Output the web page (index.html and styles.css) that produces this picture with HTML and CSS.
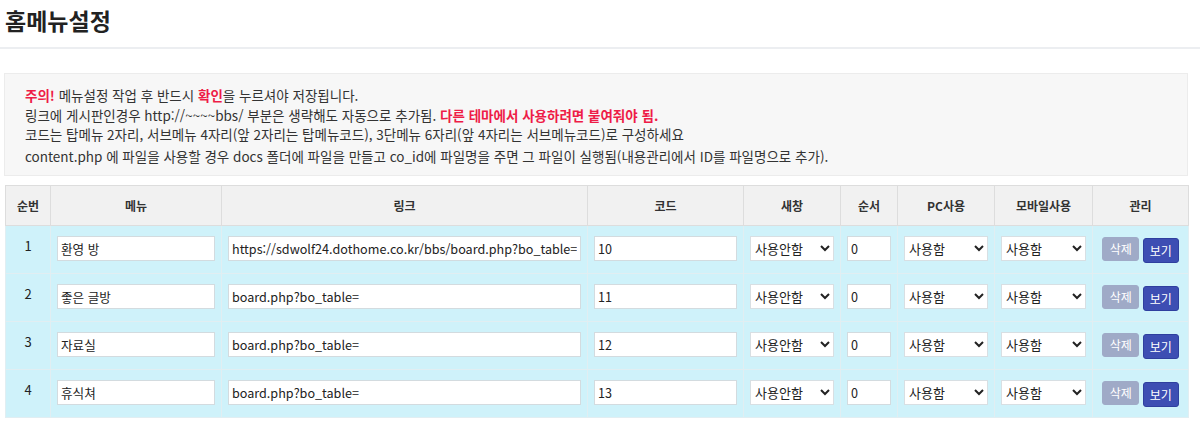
FILE: index.html
```html
<!DOCTYPE html>
<html lang="ko">
<head>
<meta charset="utf-8">
<title>홈메뉴설정</title>
<link rel="stylesheet" href="styles.css">
</head>
<body>
<div class="page">
  <h1 class="page-title">홈메뉴설정</h1>
  <div class="content">
    <div class="notice">
      <p><strong class="red">주의!</strong> 메뉴설정 작업 후 반드시 <strong class="red">확인</strong>을 누르셔야 저장됩니다.</p>
      <p>링크에 게시판인경우 http://~~~~bbs/ 부분은 생략해도 자동으로 추가됨. <strong class="red">다른 테마에서 사용하려면 붙여줘야 됨.</strong></p>
      <p>코드는 탑메뉴 2자리, 서브메뉴 4자리(앞 2자리는 탑메뉴코드), 3단메뉴 6자리(앞 4자리는 서브메뉴코드)로 구성하세요</p>
      <p class="last">content.php 에 파일을 사용할 경우 docs 폴더에 파일을 만들고 co_id에 파일명을 주면 그 파일이 실행됨(내용관리에서 ID를 파일명으로 추가).</p>
    </div>
    <table class="menu-table">
      <colgroup>
        <col class="c-no"><col class="c-menu"><col class="c-link"><col class="c-code"><col class="c-new"><col class="c-order"><col class="c-pc"><col class="c-mo"><col class="c-mng">
      </colgroup>
      <thead>
        <tr><th>순번</th><th>메뉴</th><th>링크</th><th>코드</th><th>새창</th><th>순서</th><th>PC사용</th><th>모바일사용</th><th>관리</th></tr>
      </thead>
      <tbody>
        <tr>
          <td class="no">1</td>
          <td><input class="inp" type="text" value="환영 방"></td>
          <td><input class="inp" type="text" value="https://sdwolf24.dothome.co.kr/bbs/board.php?bo_table="></td>
          <td><input class="inp" type="text" value="10"></td>
          <td><select class="sel"><option>사용안함</option><option>사용함</option></select></td>
          <td><input class="inp" type="text" value="0"></td>
          <td><select class="sel"><option>사용함</option><option>사용안함</option></select></td>
          <td><select class="sel"><option>사용함</option><option>사용안함</option></select></td>
          <td class="mng"><button class="btn btn-del" type="button">삭제</button> <a class="btn btn-view" href="#">보기</a></td>
        </tr>
        <tr>
          <td class="no">2</td>
          <td><input class="inp" type="text" value="좋은 글방"></td>
          <td><input class="inp" type="text" value="board.php?bo_table="></td>
          <td><input class="inp" type="text" value="11"></td>
          <td><select class="sel"><option>사용안함</option><option>사용함</option></select></td>
          <td><input class="inp" type="text" value="0"></td>
          <td><select class="sel"><option>사용함</option><option>사용안함</option></select></td>
          <td><select class="sel"><option>사용함</option><option>사용안함</option></select></td>
          <td class="mng"><button class="btn btn-del" type="button">삭제</button> <a class="btn btn-view" href="#">보기</a></td>
        </tr>
        <tr>
          <td class="no">3</td>
          <td><input class="inp" type="text" value="자료실"></td>
          <td><input class="inp" type="text" value="board.php?bo_table="></td>
          <td><input class="inp" type="text" value="12"></td>
          <td><select class="sel"><option>사용안함</option><option>사용함</option></select></td>
          <td><input class="inp" type="text" value="0"></td>
          <td><select class="sel"><option>사용함</option><option>사용안함</option></select></td>
          <td><select class="sel"><option>사용함</option><option>사용안함</option></select></td>
          <td class="mng"><button class="btn btn-del" type="button">삭제</button> <a class="btn btn-view" href="#">보기</a></td>
        </tr>
        <tr>
          <td class="no">4</td>
          <td><input class="inp" type="text" value="휴식쳐"></td>
          <td><input class="inp" type="text" value="board.php?bo_table="></td>
          <td><input class="inp" type="text" value="13"></td>
          <td><select class="sel"><option>사용안함</option><option>사용함</option></select></td>
          <td><input class="inp" type="text" value="0"></td>
          <td><select class="sel"><option>사용함</option><option>사용안함</option></select></td>
          <td><select class="sel"><option>사용함</option><option>사용안함</option></select></td>
          <td class="mng"><button class="btn btn-del" type="button">삭제</button> <a class="btn btn-view" href="#">보기</a></td>
        </tr>
      </tbody>
    </table>
  </div>
</div>
</body>
</html>
```
FILE: styles.css
```css
* { box-sizing: border-box; }
html, body { margin: 0; padding: 0; background: #fff; }
body {
  font-family: "Noto Sans CJK KR", "Noto Sans", sans-serif;
  color: #333;
  font-size: 13px;
}
.page-title {
  margin: 0;
  height: 49px;
  padding: 3px 5px 0;
  font-size: 23px;
  font-weight: 700;
  line-height: 34px;
  color: #222;
  border-bottom: 2px solid #eceef1;
}
.content {
  padding: 24px 12px 0 4px;
}
.notice {
  background: #f7f7f7;
  border: 1px solid #ececec;
  padding: 12px 20px 9px;
  line-height: 19.5px;
  font-size: 13.5px;
  color: #333;
}
.notice p { margin: 0; }
.notice p.last { margin-top: 2px; }
.red { color: #ee1c47; font-weight: 700; }

.menu-table {
  margin: 9px 0 0 1px;
  width: 1183px;
  border-collapse: collapse;
  table-layout: fixed;
}
.c-no { width: 45px; }
.c-menu { width: 171px; }
.c-link { width: 366px; }
.c-code { width: 156px; }
.c-new { width: 97px; }
.c-order { width: 57px; }
.c-pc { width: 97px; }
.c-mo { width: 98px; }
.c-mng { width: 96px; }

.menu-table th {
  height: 40px;
  background: #f1f1f1;
  border: 1px solid #dddddd;
  font-size: 12px;
  font-weight: 700;
  color: #333;
  text-align: center;
  vertical-align: middle;
  padding: 0;
}
.menu-table td {
  background: #cff2fa;
  border: 1px solid #e1eef2;
  padding: 10px 6px;
  vertical-align: top;
  font-size: 13px;
}
.menu-table td.no {
  text-align: center;
  line-height: 20px;
  padding: 10px 0 0 0;
  color: #222;
}
.inp {
  display: block;
  width: 100%;
  height: 25px;
  border: 1px solid #d3dbdf;
  background: #fff;
  padding: 0 3px;
  font-family: inherit;
  font-size: 12.6px;
  color: #222;
  outline: none;
}
.sel {
  display: block;
  width: 100%;
  height: 25px;
  border: 1px solid #d8dfe3;
  background-color: #fff;
  border-radius: 0;
  padding: 0 2px 0 0;
  font-family: inherit;
  font-size: 13px;
  color: #222;
}
.menu-table td.c-sel { padding-left: 5px; }
.menu-table td.mng {
  text-align: center;
  padding-left: 4px;
  padding-right: 4px;
  white-space: nowrap;
}
.btn {
  display: inline-block;
  vertical-align: top;
  height: 24px;
  line-height: 22px;
  padding: 0 6px;
  font-family: inherit;
  font-size: 12px;
  color: #fff;
  text-decoration: none;
  border-radius: 3px;
}
.btn-del {
  margin-top: 1px;
  width: 37px;
  background: #9faac7;
  border: 1px solid #9faac7;
}
.btn-view {
  margin-top: 2px;
  width: 36px;
  height: 25px;
  line-height: 23px;
  background: #3d4eb3;
  border: 1px solid #2f3f9f;
}
```
